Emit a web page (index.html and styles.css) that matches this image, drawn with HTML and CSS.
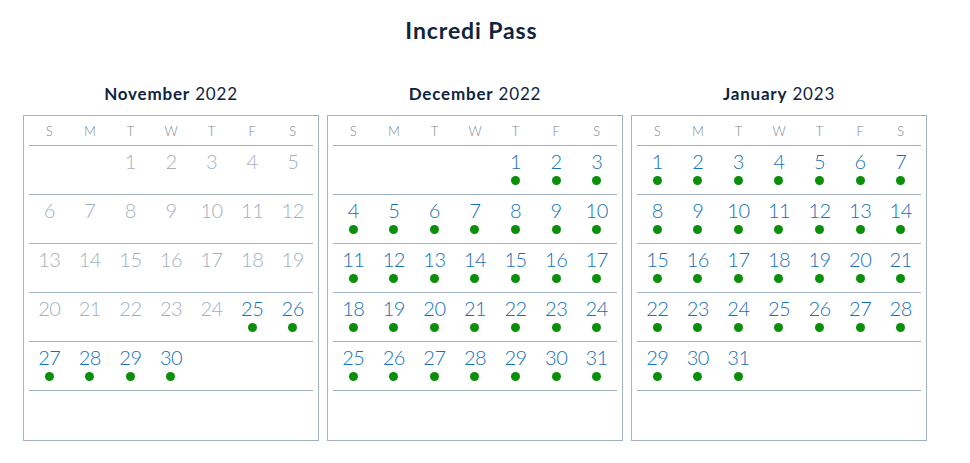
FILE: index.html
```html
<!DOCTYPE html>
<html>
<head>
<meta charset="utf-8">
<link rel="stylesheet" href="styles.css">
</head>
<body>
<div class="page">
  <h1 class="title">Incredi Pass</h1>
  <div class="months">
    <section class="month">
      <h2 class="month-name"><b>November</b> 2022</h2>
      <div class="cal">
        <div class="dow"><span>S</span><span>M</span><span>T</span><span>W</span><span>T</span><span>F</span><span>S</span></div>
        <div class="week">
          <div class="d"></div><div class="d"></div>
          <div class="d off"><span class="n">1</span></div><div class="d off"><span class="n">2</span></div><div class="d off"><span class="n">3</span></div><div class="d off"><span class="n">4</span></div><div class="d off"><span class="n">5</span></div>
        </div>
        <div class="week">
          <div class="d off"><span class="n">6</span></div><div class="d off"><span class="n">7</span></div><div class="d off"><span class="n">8</span></div><div class="d off"><span class="n">9</span></div><div class="d off"><span class="n">10</span></div><div class="d off"><span class="n">11</span></div><div class="d off"><span class="n">12</span></div>
        </div>
        <div class="week">
          <div class="d off"><span class="n">13</span></div><div class="d off"><span class="n">14</span></div><div class="d off"><span class="n">15</span></div><div class="d off"><span class="n">16</span></div><div class="d off"><span class="n">17</span></div><div class="d off"><span class="n">18</span></div><div class="d off"><span class="n">19</span></div>
        </div>
        <div class="week">
          <div class="d off"><span class="n">20</span></div><div class="d off"><span class="n">21</span></div><div class="d off"><span class="n">22</span></div><div class="d off"><span class="n">23</span></div><div class="d off"><span class="n">24</span></div>
          <div class="d"><span class="n">25</span><i class="dot"></i></div><div class="d"><span class="n">26</span><i class="dot"></i></div>
        </div>
        <div class="week">
          <div class="d"><span class="n">27</span><i class="dot"></i></div><div class="d"><span class="n">28</span><i class="dot"></i></div><div class="d"><span class="n">29</span><i class="dot"></i></div><div class="d"><span class="n">30</span><i class="dot"></i></div>
          <div class="d"></div><div class="d"></div><div class="d"></div>
        </div>
        <div class="week last"></div>
      </div>
    </section>

    <section class="month">
      <h2 class="month-name"><b>December</b> 2022</h2>
      <div class="cal">
        <div class="dow"><span>S</span><span>M</span><span>T</span><span>W</span><span>T</span><span>F</span><span>S</span></div>
        <div class="week">
          <div class="d"></div><div class="d"></div><div class="d"></div><div class="d"></div>
          <div class="d"><span class="n">1</span><i class="dot"></i></div><div class="d"><span class="n">2</span><i class="dot"></i></div><div class="d"><span class="n">3</span><i class="dot"></i></div>
        </div>
        <div class="week">
          <div class="d"><span class="n">4</span><i class="dot"></i></div><div class="d"><span class="n">5</span><i class="dot"></i></div><div class="d"><span class="n">6</span><i class="dot"></i></div><div class="d"><span class="n">7</span><i class="dot"></i></div><div class="d"><span class="n">8</span><i class="dot"></i></div><div class="d"><span class="n">9</span><i class="dot"></i></div><div class="d"><span class="n">10</span><i class="dot"></i></div>
        </div>
        <div class="week">
          <div class="d"><span class="n">11</span><i class="dot"></i></div><div class="d"><span class="n">12</span><i class="dot"></i></div><div class="d"><span class="n">13</span><i class="dot"></i></div><div class="d"><span class="n">14</span><i class="dot"></i></div><div class="d"><span class="n">15</span><i class="dot"></i></div><div class="d"><span class="n">16</span><i class="dot"></i></div><div class="d"><span class="n">17</span><i class="dot"></i></div>
        </div>
        <div class="week">
          <div class="d"><span class="n">18</span><i class="dot"></i></div><div class="d"><span class="n">19</span><i class="dot"></i></div><div class="d"><span class="n">20</span><i class="dot"></i></div><div class="d"><span class="n">21</span><i class="dot"></i></div><div class="d"><span class="n">22</span><i class="dot"></i></div><div class="d"><span class="n">23</span><i class="dot"></i></div><div class="d"><span class="n">24</span><i class="dot"></i></div>
        </div>
        <div class="week">
          <div class="d"><span class="n">25</span><i class="dot"></i></div><div class="d"><span class="n">26</span><i class="dot"></i></div><div class="d"><span class="n">27</span><i class="dot"></i></div><div class="d"><span class="n">28</span><i class="dot"></i></div><div class="d"><span class="n">29</span><i class="dot"></i></div><div class="d"><span class="n">30</span><i class="dot"></i></div><div class="d"><span class="n">31</span><i class="dot"></i></div>
        </div>
        <div class="week last"></div>
      </div>
    </section>

    <section class="month">
      <h2 class="month-name"><b>January</b> 2023</h2>
      <div class="cal">
        <div class="dow"><span>S</span><span>M</span><span>T</span><span>W</span><span>T</span><span>F</span><span>S</span></div>
        <div class="week">
          <div class="d"><span class="n">1</span><i class="dot"></i></div><div class="d"><span class="n">2</span><i class="dot"></i></div><div class="d"><span class="n">3</span><i class="dot"></i></div><div class="d"><span class="n">4</span><i class="dot"></i></div><div class="d"><span class="n">5</span><i class="dot"></i></div><div class="d"><span class="n">6</span><i class="dot"></i></div><div class="d"><span class="n">7</span><i class="dot"></i></div>
        </div>
        <div class="week">
          <div class="d"><span class="n">8</span><i class="dot"></i></div><div class="d"><span class="n">9</span><i class="dot"></i></div><div class="d"><span class="n">10</span><i class="dot"></i></div><div class="d"><span class="n">11</span><i class="dot"></i></div><div class="d"><span class="n">12</span><i class="dot"></i></div><div class="d"><span class="n">13</span><i class="dot"></i></div><div class="d"><span class="n">14</span><i class="dot"></i></div>
        </div>
        <div class="week">
          <div class="d"><span class="n">15</span><i class="dot"></i></div><div class="d"><span class="n">16</span><i class="dot"></i></div><div class="d"><span class="n">17</span><i class="dot"></i></div><div class="d"><span class="n">18</span><i class="dot"></i></div><div class="d"><span class="n">19</span><i class="dot"></i></div><div class="d"><span class="n">20</span><i class="dot"></i></div><div class="d"><span class="n">21</span><i class="dot"></i></div>
        </div>
        <div class="week">
          <div class="d"><span class="n">22</span><i class="dot"></i></div><div class="d"><span class="n">23</span><i class="dot"></i></div><div class="d"><span class="n">24</span><i class="dot"></i></div><div class="d"><span class="n">25</span><i class="dot"></i></div><div class="d"><span class="n">26</span><i class="dot"></i></div><div class="d"><span class="n">27</span><i class="dot"></i></div><div class="d"><span class="n">28</span><i class="dot"></i></div>
        </div>
        <div class="week">
          <div class="d"><span class="n">29</span><i class="dot"></i></div><div class="d"><span class="n">30</span><i class="dot"></i></div><div class="d"><span class="n">31</span><i class="dot"></i></div>
          <div class="d"></div><div class="d"></div><div class="d"></div><div class="d"></div>
        </div>
        <div class="week last"></div>
      </div>
    </section>
  </div>
</div>
</body>
</html>
```

FILE: styles.css
```css
* { box-sizing: border-box; }
html, body { margin: 0; padding: 0; background: #ffffff; }
body {
  font-family: Lato, "Open Sans", "Liberation Sans", sans-serif;
  color: #0f2440;
}
.page {
  width: 970px;
  padding: 16px 0 0 23px;
}
.title {
  width: 904px;
  margin: 0;
  padding-right: 7px;
  text-align: center;
  font-size: 23px;
  line-height: 28px;
  font-weight: 700;
  letter-spacing: 0.9px;
  color: #0f2440;
}
.months {
  display: grid;
  grid-template-columns: repeat(3, 296px);
  column-gap: 8px;
  margin-top: 40px;
}
.month-name {
  margin: 0 0 11px;
  text-align: center;
  font-size: 17px;
  line-height: 20px;
  font-weight: 400;
  letter-spacing: 0.8px;
  color: #0f2440;
}
.month-name b { font-weight: 700; }
.cal {
  border: 1px solid #a3b1c2;
  padding: 0 5px;
}
.dow {
  display: grid;
  grid-template-columns: repeat(7, 1fr);
  height: 30px;
  border-bottom: 1px solid #a3b1c2;
  align-items: center;
  text-align: center;
  font-size: 13px;
  font-weight: 300;
  color: #7a8797;
}
.week {
  display: grid;
  grid-template-columns: repeat(7, 1fr);
  height: 49px;
  border-bottom: 1px solid #a3b1c2;
}
.week.last { border-bottom: none; }
.d {
  display: flex;
  flex-direction: column;
  align-items: center;
  padding-top: 4px;
}
.n {
  font-size: 20px;
  line-height: 22px;
  font-weight: 300;
  letter-spacing: -0.5px;
  color: #1570b8;
}
.off .n { color: #a4b0c1; }
.dot {
  display: block;
  width: 9px;
  height: 9px;
  margin-top: 4px;
  border-radius: 50%;
  background: #0a8f0a;
}
```
